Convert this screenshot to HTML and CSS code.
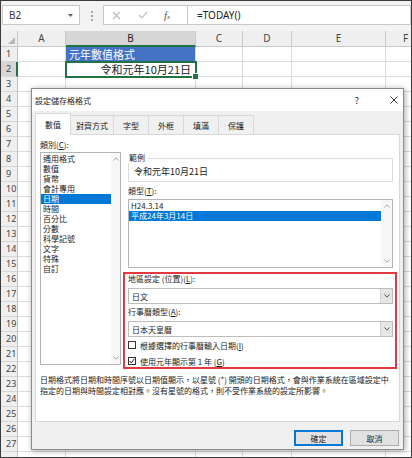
FILE: index.html
```html
<!DOCTYPE html>
<html lang="zh-Hant">
<head>
    <meta charset="UTF-8">
    <meta name="viewport" content="width=device-width, initial-scale=1.0">
    <title>設定儲存格格式</title>
    <link rel="stylesheet" href="styles.css">
</head>
<body>
    <div class="window">
        <div class="formula-bar">
            <div class="name-box">
                <span>B2</span>
                <svg width="5" height="3" viewBox="0 0 5 3"><path d="M0 0h5L2.5 3z" fill="#606060"/></svg>
            </div>
            <div class="grip"><i></i><i></i><i></i></div>
            <div class="fx-buttons">
                <svg class="cancel" width="9" height="9" viewBox="0 0 9 9"><path d="M1 1l7 7M8 1L1 8" stroke="#b8b8b8" stroke-width="1.1"/></svg>
                <svg class="enter" width="10" height="8" viewBox="0 0 10 8"><path d="M1 4.2l2.8 2.8L9 .8" fill="none" stroke="#b8b8b8" stroke-width="1.1"/></svg>
                <span class="fx">f<small>x</small></span>
            </div>
            <div class="formula-input">=TODAY()</div>
        </div>

        <div class="sheet" id="sheet"></div>

        <div class="dialog">
            <div class="dialog-title">
                <span>設定儲存格格式</span>
                <span class="help">?</span>
                <svg class="close" width="8" height="8" viewBox="0 0 8 8"><path d="M.5.5l7 7M7.5.5l-7 7" stroke="#333" stroke-width="1"/></svg>
            </div>

            <div class="tabs">
                <div class="tab current">數值</div>
                <div class="tab wide">對齊方式</div>
                <div class="tab">字型</div>
                <div class="tab">外框</div>
                <div class="tab">填滿</div>
                <div class="tab">保護</div>
            </div>

            <div class="panel">
                <div class="panel-grid">
                    <div class="category">
                        <div class="label">類別(<u>C</u>):</div>
                        <div class="listbox category-list">
                            <ul class="items">
                                <li>通用格式</li>
                                <li>數值</li>
                                <li>貨幣</li>
                                <li>會計專用</li>
                                <li class="selected">日期</li>
                                <li>時間</li>
                                <li>百分比</li>
                                <li>分數</li>
                                <li>科學記號</li>
                                <li>文字</li>
                                <li>特殊</li>
                                <li>自訂</li>
                            </ul>
                            <div class="scrollbar">
                                <svg width="6" height="4" viewBox="0 0 6 4"><path d="M.5 3.5L3 .8l2.5 2.7" fill="none" stroke="#a8a8a8"/></svg>
                                <svg width="6" height="4" viewBox="0 0 6 4"><path d="M.5.5L3 3.2 5.5.5" fill="none" stroke="#a8a8a8"/></svg>
                            </div>
                        </div>
                    </div>

                    <div class="details">
                        <fieldset class="sample">
                            <legend>範例</legend>
                            <div class="sample-value">令和元年10月21日</div>
                        </fieldset>

                        <div class="label type-label">類型(<u>T</u>):</div>
                        <div class="listbox type-list">
                            <ul class="items">
                                <li>H24.3.14</li>
                                <li class="selected">平成24年3月14日</li>
                            </ul>
                            <div class="scrollbar">
                                <svg width="6" height="4" viewBox="0 0 6 4"><path d="M.5 3.5L3 .8l2.5 2.7" fill="none" stroke="#a8a8a8"/></svg>
                                <svg width="6" height="4" viewBox="0 0 6 4"><path d="M.5.5L3 3.2 5.5.5" fill="none" stroke="#a8a8a8"/></svg>
                            </div>
                        </div>

                        <div class="calendar-box">
                            <div class="label">地區設定 (位置)(<u>L</u>):</div>
                            <div class="select">
                                <span class="select-value">日文</span>
                                <span class="drop"><svg width="6" height="4" viewBox="0 0 6 4"><path d="M.5.5L3 3.2 5.5.5" fill="none" stroke="#555"/></svg></span>
                            </div>
                            <div class="label">行事曆類型(<u>A</u>):</div>
                            <div class="select">
                                <span class="select-value">日本天皇曆</span>
                                <span class="drop"><svg width="6" height="4" viewBox="0 0 6 4"><path d="M.5.5L3 3.2 5.5.5" fill="none" stroke="#555"/></svg></span>
                            </div>
                            <div class="check">
                                <span class="box"></span>
                                <span>根據選擇的行事曆輸入日期(<u>I</u>)</span>
                            </div>
                            <div class="check second">
                                <span class="box"><svg width="6" height="6" viewBox="0 0 6 6"><path d="M.6 3.1l1.7 1.9L5.4.7" fill="none" stroke="#222" stroke-width="1"/></svg></span>
                                <span>使用元年顯示第 1 年 (<u>G</u>)</span>
                            </div>
                        </div>
                    </div>
                </div>

                <p class="note">日期格式將日期和時間序號以日期值顯示，以星號 (*) 開頭的日期格式，會與作業系統在區域設定中<br>指定的日期與時間設定相對應。沒有星號的格式，則不受作業系統的設定所影響。</p>
            </div>

            <div class="dialog-footer">
                <button class="btn primary">確定</button>
                <button class="btn">取消</button>
            </div>
        </div>
    </div>

    <script>
        const columns = ['A', 'B', 'C', 'D', 'E', 'F'];
        const values = {
            B1: '元年數值格式',
            B2: '令和元年10月21日'
        };

        let html = '<div class="row head"><div class="cell rh corner">' +
            '<svg width="7" height="7" viewBox="0 0 7 7"><path d="M7 0v7H0z" fill="#b8b8b8"/></svg></div>';
        columns.forEach(function (col) {
            const selected = col === 'B' ? ' selected' : '';
            html += '<div class="cell col-' + col.toLowerCase() + selected + '">' + col + '</div>';
        });
        html += '</div>';

        // row 28 only peeks in at the bottom edge, so it gets no number
        for (let r = 1; r <= 28; r++) {
            html += '<div class="row"><div class="cell rh' + (r === 2 ? ' selected' : '') + '">' + (r < 28 ? r : '') + '</div>';
            columns.forEach(function (col) {
                const ref = col + r;
                let cls = 'cell col-' + col.toLowerCase();
                if (ref === 'B1') cls += ' banner';
                if (ref === 'B2') cls += ' active-cell';
                html += '<div class="' + cls + '">' + (values[ref] || '') + '</div>';
            });
            html += '</div>';
        }

        document.getElementById('sheet').innerHTML = html;
    </script>
</body>
</html>
```

FILE: styles.css
```css
* {
    box-sizing: border-box;
}

body {
    margin: 0;
    font-family: "Noto Sans", "Noto Sans CJK TC", sans-serif;
    color: #222;
}

.window {
    position: relative;
    width: 412px;
    height: 458px;
    border: 1px solid #3c3c3c;
    background-color: #fff;
    overflow: hidden;
}

/* formula bar */

.formula-bar {
    display: flex;
    align-items: flex-start;
    height: 30px;
    padding-top: 4px;
    background-color: #f3f3f3;
}

.name-box {
    display: flex;
    align-items: center;
    justify-content: space-between;
    width: 78px;
    height: 20px;
    margin-left: 1px;
    padding: 0 6px;
    background-color: #fff;
    border: 1px solid #c8c8c8;
    font-size: 10px;
    color: #333;
}

.grip {
    display: flex;
    flex-direction: column;
    gap: 2px;
    margin: 6px 0 0 11px;
}

.grip i {
    width: 2px;
    height: 2px;
    background-color: #a8a8a8;
}

.fx-buttons {
    display: flex;
    align-items: center;
    width: 84px;
    height: 20px;
    margin-left: 10px;
    padding-left: 8px;
    background-color: #fff;
    border: 1px solid #c8c8c8;
    border-right: none;
}

.fx-buttons .enter {
    margin-left: 17px;
}

.fx {
    margin-left: 16px;
    font-family: "Liberation Serif", serif;
    font-style: italic;
    font-size: 11px;
    color: #555;
}

.fx small {
    font-size: 7px;
}

.formula-input {
    flex: 1;
    display: flex;
    align-items: center;
    height: 20px;
    padding-left: 9px;
    background-color: #fff;
    border: 1px solid #c8c8c8;
    font-size: 10px;
    color: #222;
}

/* sheet */

.sheet {
    overflow: hidden;
}

.row {
    display: flex;
    height: 15px;
}

.row.head {
    height: 16px;
}

.cell {
    flex: none;
    height: 100%;
    border-right: 1px solid #dcdcdc;
    border-bottom: 1px solid #dcdcdc;
    overflow: hidden;
    white-space: nowrap;
    font-size: 11px;
    line-height: 14px;
}

.head .cell {
    background-color: #efefef;
    border-color: #c9c9c9;
    text-align: center;
    font-size: 10px;
    line-height: 15px;
    color: #444;
}

.rh {
    width: 17px;
    padding-left: 5px;
    background-color: #efefef;
    border-right-color: #c2c2c2;
    border-bottom-color: #d6d6d6;
    font-size: 9px;
    color: #444;
}

.corner {
    display: flex;
    align-items: flex-end;
    justify-content: flex-end;
    padding: 0 2px 2px 0;
}

.head .cell.selected {
    background-color: #d6d6d6;
    border-bottom: 2px solid #217346;
    color: #222;
}

.rh.selected {
    background-color: #d6d6d6;
    border-right: 2px solid #217346;
}

.col-a { width: 48px; }
.col-b { width: 130px; }
.col-c { width: 47px; }
.col-d { width: 49px; }
.col-e { width: 94px; }
.col-f { width: 40px; }

.banner {
    padding-left: 3px;
    background-color: #4472c4;
    color: #fff;
    font-family: "Noto Sans CJK TC", sans-serif;
}

.active-cell {
    position: relative;
    z-index: 1;
    padding-right: 4px;
    text-align: right;
    font-family: "Noto Sans CJK TC", sans-serif;
    color: #222;
    outline: 2px solid #217346;
    outline-offset: -1px;
    overflow: visible;
}

.active-cell::after {
    content: "";
    position: absolute;
    right: -4px;
    bottom: -4px;
    width: 5px;
    height: 5px;
    background-color: #217346;
    border: 1px solid #fff;
}

/* dialog */

.dialog {
    position: absolute;
    left: 30px;
    top: 87px;
    width: 373px;
    background-color: #f0f0f0;
    border: 1px solid #8a8a8a;
    box-shadow: 1px 1px 6px rgba(0, 0, 0, 0.35);
    font-family: "Noto Sans CJK TC", sans-serif;
    font-size: 8px;
    color: #1a1a1a;
}

.dialog-title {
    display: flex;
    align-items: center;
    height: 22px;
    padding: 0 5px 0 3px;
    background-color: #fff;
}

.help {
    width: 10px;
    margin-left: auto;
    margin-right: 28px;
    text-align: center;
    font-size: 9px;
}

.tabs {
    display: flex;
    align-items: flex-end;
    height: 23px;
    padding-left: 3px;
}

.tab {
    display: flex;
    align-items: center;
    height: 19px;
    margin-left: -1px;
    padding: 0 9px;
    border: 1px solid #d9d9d9;
    border-bottom: none;
    background-color: #f0f0f0;
}

.tab:first-child {
    margin-left: 0;
}

.tab.wide {
    padding: 0 5px;
}

.tab.current {
    position: relative;
    z-index: 1;
    height: 22px;
    margin-bottom: -1px;
    background-color: #fff;
}

.panel {
    height: 288px;
    margin: 0 3px;
    padding: 4px 4px 0;
    background-color: #fff;
    border: 1px solid #d9d9d9;
}

.panel-grid {
    display: grid;
    grid-template-columns: 81px 265px;
    column-gap: 7px;
    align-items: start;
}

.label {
    line-height: 10px;
    white-space: nowrap;
}

.category .label {
    line-height: 11px;
}

.listbox {
    display: flex;
    background-color: #fff;
    border: 1px solid #b4b4b4;
}

.category-list {
    height: 213px;
    margin-top: 2px;
}

.items {
    flex: 1;
    margin: 0;
    padding: 1px 0 0;
    list-style: none;
    line-height: 10px;
}

.items li {
    padding-left: 2px;
    white-space: nowrap;
}

.items li.selected {
    background-color: #0078d7;
    color: #fff;
}

.scrollbar {
    display: flex;
    flex-direction: column;
    align-items: center;
    justify-content: space-between;
    width: 9px;
    padding: 4px 0;
    background-color: #f7f7f7;
}

.type-list .scrollbar {
    width: 11px;
}

.details {
    margin-top: 14px;
}

.sample {
    margin: 0;
    padding: 3px 5px;
    border: 1px solid #dcdcdc;
}

.sample legend {
    margin-left: -6px;
    padding: 0 2px 0 1px;
    line-height: 10px;
    background-color: #fff;
}

.sample-value {
    font-size: 9px;
    line-height: 12px;
}

.type-label {
    margin-top: 4px;
}

.type-list {
    height: 69px;
    margin-top: 3px;
}

.calendar-box {
    margin: 4px -4px 0 -5px;
    padding: 0 2px 1px 3px;
    border: 2px solid #e0393e;
}

.select {
    display: flex;
    height: 16px;
    margin: 4px 0 3px;
    background-color: #fff;
    border: 1px solid #bdbdbd;
}

.select-value {
    flex: 1;
    display: flex;
    align-items: center;
    padding-left: 3px;
}

.drop {
    display: flex;
    align-items: center;
    justify-content: center;
    width: 12px;
    background-color: #e6e6e6;
    border-left: 1px solid #cfcfcf;
}

.check {
    display: flex;
    align-items: center;
    gap: 4px;
    height: 10px;
    margin-top: 3px;
    white-space: nowrap;
}

.check.second {
    margin-top: 6px;
}

.box {
    display: flex;
    align-items: center;
    justify-content: center;
    width: 8px;
    height: 8px;
    background-color: #fff;
    border: 1px solid #333;
}

.note {
    margin: 5px 0 0;
    line-height: 11px;
    white-space: nowrap;
}

.dialog-footer {
    display: flex;
    justify-content: flex-end;
    gap: 7px;
    padding: 8px 4px 3px 0;
}

.btn {
    width: 49px;
    height: 16px;
    padding: 0;
    background-color: #e1e1e1;
    border: 1px solid #adadad;
    font-family: inherit;
    font-size: 8px;
    color: #1a1a1a;
}

.btn.primary {
    border-color: #0078d7;
    box-shadow: inset 0 0 0 1px #0078d7;
}
```
